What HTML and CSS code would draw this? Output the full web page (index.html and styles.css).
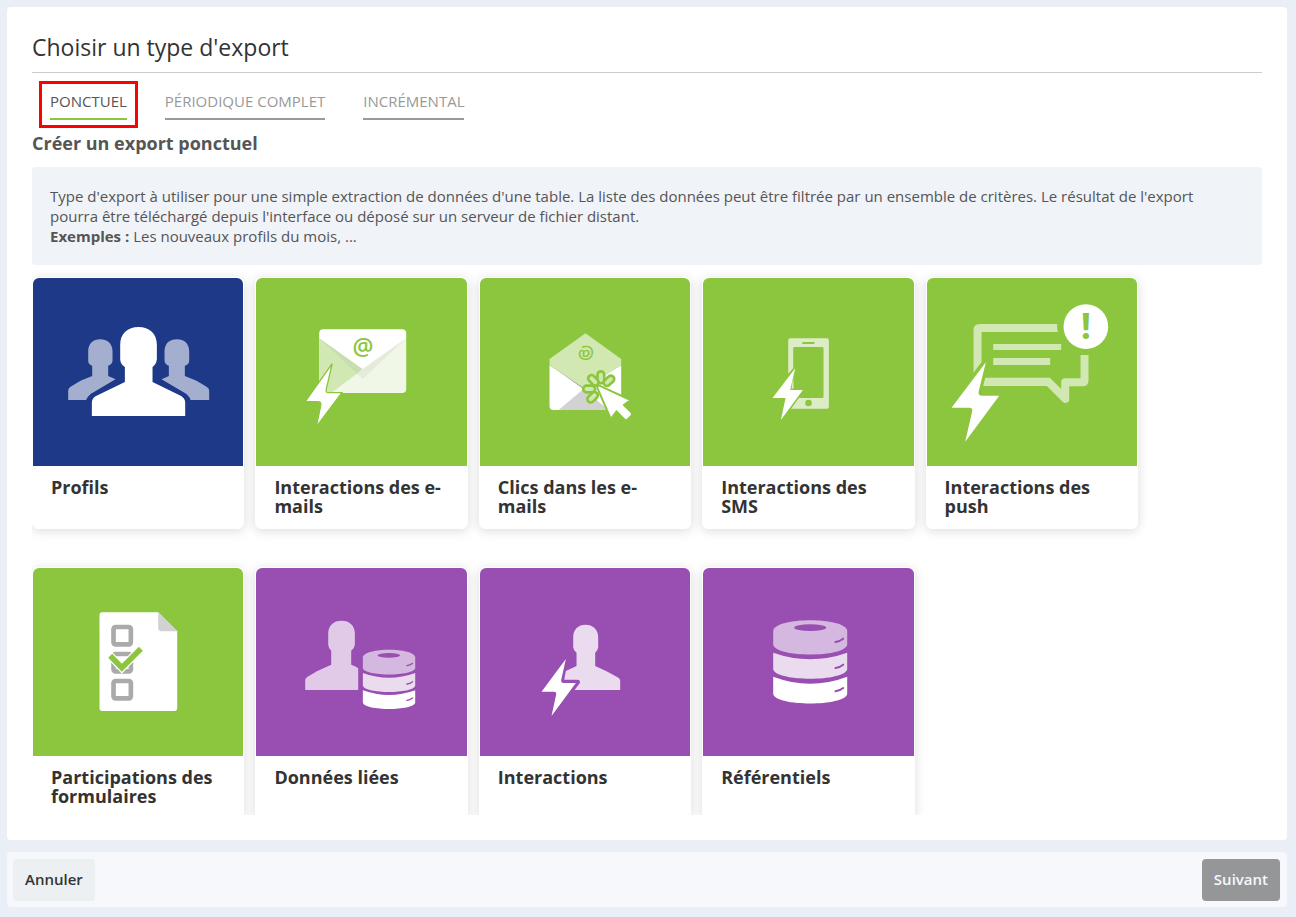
FILE: index.html
```html
<!DOCTYPE html>
<html lang="fr">
<head>
    <meta charset="UTF-8">
    <meta name="viewport" content="width=device-width, initial-scale=1.0">
    <title>Choisir un type d'export</title>
    <link rel="stylesheet" href="styles.css">
</head>
<body>
    <main class="panel">
        <h1>Choisir un type d'export</h1>
        <nav class="tabs">
            <a href="#ponctuel" class="tab active">PONCTUEL</a>
            <a href="#periodique" class="tab">PÉRIODIQUE COMPLET</a>
            <a href="#incremental" class="tab">INCRÉMENTAL</a>
        </nav>
        <h2>Créer un export ponctuel</h2>
        <div class="description">
            <p>Type d'export à utiliser pour une simple extraction de données d'une table. La liste des données peut être filtrée par un ensemble de critères. Le résultat de l'export pourra être téléchargé depuis l'interface ou déposé sur un serveur de fichier distant.</p>
            <p><strong>Exemples :</strong> Les nouveaux profils du mois, ...</p>
        </div>

        <div class="card-list">
            <a href="#profils" class="card">
                <svg class="card-image blue" viewBox="24 24 630 564" aria-hidden="true">
                    <g fill="#a4afcf">
                        <path d="M189 244C189 221 204 208 225 208S262 221 262 244V272Q261 283 249 287V318L271 328L205 367Q188 376 183 390H129V362Q129 355 136 350L166 332L201 318V287Q189 283 189 272Z"/>
                        <path d="M492 244C492 221 477 208 455 208S418 221 418 244V272Q419 283 431 287V318L409 328L475 367Q492 376 496 390H552V362Q552 355 544 350L514 332L479 318V287Q492 283 492 272Z"/>
                    </g>
                    <path fill="#fff" d="M285 224C285 191 307 171 340 171S395 191 395 224V268Q393 284 382 291V336L468 378Q480 386 480 398V438H200V398Q200 386 211 379L299 336V291Q286 284 285 268Z"/>
                </svg>
                <span class="card-title">Profils</span>
            </a>

            <a href="#interactions-emails" class="card">
                <svg class="card-image green" viewBox="18 24 630 564" aria-hidden="true">
                    <path fill="#f1f7e6" d="M207 204H468V357Q468 369 456 369H219Q207 369 207 357Z"/>
                    <path fill="#d1e8b2" d="M207 204L337 296L330 304L243 369H219Q207 369 207 357Z"/>
                    <path fill="#c8deb0" d="M207 204L337 296L321 312Z"/>
                    <path fill="#e5eadb" d="M468 204L337 296L321 310L338 326Z"/>
                    <path fill="#fff" d="M207 204V190Q207 178 219 178H456Q468 178 468 190V204L337 297Z"/>
                    <text class="at" x="338" y="254" font-size="70">@</text>
                    <path fill="#fff" stroke="#8cc63f" stroke-width="4" d="M246 281L165 395H203Q213 395 212 405L198 471L275 368H235Q226 368 228 358Z"/>
                </svg>
                <span class="card-title">Interactions des e-mails</span>
            </a>

            <a href="#clics-emails" class="card">
                <svg class="card-image green" viewBox="15 24 630 564" aria-hidden="true">
                    <path fill="#fff" d="M223 286L325 352L438 286V420H235Q223 420 223 408Z"/>
                    <path fill="#d2d2d2" d="M250 420L325 357L400 420Z"/>
                    <path fill="#aaa" d="M223 284L325 358L438 284L330 340Z"/>
                    <path fill="#d1e8b2" d="M223 267L331 190L438 267V285L337 352Q326 355 316 347L223 285Z"/>
                    <text class="at" x="332" y="236" font-size="54" transform="rotate(180 332 250)" dy="32">@</text>
                    <g fill="#d1e8b2" stroke="#8cc63f" stroke-width="8">
                        <rect x="367" y="304" width="20" height="36" rx="10"/>
                        <rect x="367" y="304" width="20" height="36" rx="10" transform="rotate(47 377 355)"/>
                        <rect x="367" y="304" width="20" height="36" rx="10" transform="rotate(-43 377 355)"/>
                        <rect x="367" y="304" width="20" height="36" rx="10" transform="rotate(-90 377 357)"/>
                        <rect x="367" y="304" width="20" height="36" rx="10" transform="rotate(-135 377 357)"/>
                    </g>
                    <path fill="#fff" stroke="#8cc63f" stroke-width="6" stroke-linejoin="round" d="M371 346Q365 347 367 355L407 447L424 424L446 447Q452 454 459 447L468 438Q474 431 467 425L446 405L466 390Z"/>
                </svg>
                <span class="card-title">Clics dans les e-mails</span>
            </a>

            <a href="#interactions-sms" class="card">
                <svg class="card-image green" viewBox="9 24 630 564" aria-hidden="true">
                    <path fill="#dcedc6" fill-rule="evenodd" d="M270 205H380Q386 205 386 211V410Q386 416 380 416H270Q264 416 264 410V211Q264 205 270 205ZM283 231Q279 231 279 235V384H366Q370 384 370 380V235Q370 231 366 231Z"/>
                    <rect x="306" y="216" width="37" height="6" rx="2" fill="#8cc63f"/>
                    <circle cx="325" cy="399" r="10" fill="#8cc63f"/>
                    <path fill="#8cc63f" d="M287 286L258 318L200 395L255 430H263L296 384L275 352Z"/>
                    <path fill="#dcedc6" d="M279 325L280 353L274 358Z"/>
                    <path fill="#fff" d="M285 295L217 384H256L242 450L308 360H270Z"/>
                </svg>
                <span class="card-title">Interactions des SMS</span>
            </a>

            <a href="#interactions-push" class="card">
                <svg class="card-image green" viewBox="21 24 630 564" aria-hidden="true">
                    <g fill="#d1e8b2">
                        <path d="M160 308V180Q160 162 178 162H411V174L413 186H184V276Z"/>
                        <path d="M195 323H389L423 357V337Q423 325 435 325H481V255H505V331Q505 349 487 349H447V391Q444 400 433 399L428 396L380 348H189Z"/>
                        <path d="M219 222H423V240H219ZM219 264H390V285H219Z"/>
                    </g>
                    <circle cx="497" cy="170" r="67" fill="#fff"/>
                    <text class="mark" x="497" y="208" font-size="108">!</text>
                    <path fill="#fff" d="M197 277L94 413H148Q158 413 156 424L135 515L237 377H185Q174 377 175 366Z"/>
                </svg>
                <span class="card-title">Interactions des push</span>
            </a>

            <a href="#participations" class="card">
                <svg class="card-image green" viewBox="24 24 630 564" aria-hidden="true">
                    <path fill="#fff" d="M231 157H399L456 214V445Q456 453 448 453H231Q223 453 223 445V165Q223 157 231 157Z"/>
                    <path fill="#d2d2d2" d="M399 157L456 214H409Q399 214 399 204Z"/>
                    <g fill="none" stroke="#aaa" stroke-width="14">
                        <rect x="265" y="201" width="52" height="52" rx="6"/>
                        <rect x="265" y="282" width="52" height="52" rx="6"/>
                        <rect x="265" y="363" width="52" height="52" rx="6"/>
                    </g>
                    <path fill="none" stroke="#fff" stroke-width="24" d="M248 280L290 324L354 258"/>
                    <path fill="none" stroke="#8cc63f" stroke-width="17" d="M255 287L290 323L347 266"/>
                </svg>
                <span class="card-title">Participations des formulaires</span>
            </a>

            <a href="#donnees-liees" class="card">
                <svg class="card-image purple" viewBox="18 24 630 564" aria-hidden="true">
                    <path fill="#e1cae7" d="M234 221C234 196 250 182 274 182S314 196 314 221V254Q313 265 303 272V314Q315 317 324 325V390H165V361Q165 355 171 351L200 334L243 314V272Q235 265 234 254Z"/>
                    <path fill="#d4b8df" d="M338 292C342 262 491 262 495 292V325C489 350 344 350 338 325Z"/>
                    <ellipse cx="416" cy="286" rx="34" ry="7" fill="#984fb1"/>
                    <path fill="#eadbef" d="M338 339Q416 368 495 339V377C489 402 344 402 338 377Z"/>
                    <path fill="#fff" d="M338 391Q416 419 495 391V428C489 453 344 453 338 428Z"/>
                    <path class="slots" stroke-width="4" d="M470 317Q480 316 487 310M470 372Q480 371 487 365M470 421Q480 420 487 414"/>
                </svg>
                <span class="card-title">Données liées</span>
            </a>

            <a href="#interactions" class="card">
                <svg class="card-image purple" viewBox="15 24 630 564" aria-hidden="true">
                    <path fill="#eadbef" d="M294 232C294 208 309 194 331 194S369 208 369 232V262Q368 272 360 278V318L397 335L427 352Q435 356 435 363V390H298L314 369Q316 359 306 359H267L272 333L304 318V278Q295 272 294 262Z"/>
                    <path fill="#fff" d="M272 297L199 395H236Q244 395 243 403L229 468L302 369H265Q257 369 258 360Z"/>
                </svg>
                <span class="card-title">Interactions</span>
            </a>

            <a href="#referentiels" class="card">
                <svg class="card-image purple" viewBox="9 24 630 564" aria-hidden="true">
                    <path fill="#d4b8df" d="M219 212C225 170 435 170 441 212V254C433 293 227 293 219 254Z"/>
                    <ellipse cx="330" cy="203" rx="48" ry="10" fill="#984fb1"/>
                    <path fill="#eadbef" d="M219 278Q330 317 441 278V328C433 366 227 366 219 328Z"/>
                    <path fill="#fff" d="M219 350Q330 392 441 350V402C433 440 227 440 219 402Z"/>
                    <path class="slots" stroke-width="6" d="M406 246Q419 244 429 236M406 324Q419 322 429 314M406 394Q419 392 429 384"/>
                </svg>
                <span class="card-title">Référentiels</span>
            </a>
        </div>
    </main>

    <footer class="actions">
        <button type="button" class="btn cancel">Annuler</button>
        <button type="button" class="btn next">Suivant</button>
    </footer>
</body>
</html>
```

FILE: styles.css
```css
* {
    box-sizing: border-box;
}
body {
    display: flex;
    flex-direction: column;
    gap: 12px;
    height: 100vh;
    margin: 0;
    padding: 7px 9px 10px 7px;
    font-family: "Open Sans", sans-serif;
    font-size: 15px;
    line-height: 20px;
    color: #555;
    background-color: #eaeff7;
}
.panel {
    display: flex;
    flex-direction: column;
    flex: 1;
    min-height: 0;
    padding: 25px;
    background-color: white;
    border-radius: 4px;
}
h1 {
    margin: 0;
    padding-bottom: 10px;
    font-size: 23px;
    font-weight: 400;
    line-height: 30px;
    color: #333;
    border-bottom: 1px solid #ccc;
}
.tabs {
    display: flex;
    gap: 38px;
    margin-top: 18px;
    padding-left: 18px;
}
.tab {
    padding-bottom: 7px;
    color: #999;
    text-decoration: none;
    border-bottom: 2px solid #999;
}
.tab.active {
    position: relative;
    color: #555;
    border-bottom-color: #8cc63f;
}
.tab.active::after {
    content: "";
    position: absolute;
    inset: -10px -11px -10px;
    border: 3px solid #f00;
}
h2 {
    margin: 11px 0 12px;
    font-size: 18px;
    font-weight: 700;
    line-height: 24px;
}
.description {
    padding: 19px 18px;
    background-color: #f0f3f8;
    border-radius: 4px;
}
.description p {
    margin: 0;
}
.card-list {
    display: grid;
    grid-template-columns: repeat(5, 1fr);
    align-content: start;
    gap: 38px 11px;
    flex: 1;
    min-height: 0;
    padding: 12px 124px 0 0;
    overflow-y: auto;
    scrollbar-width: none;
}
.card {
    border: 1px solid white;
    border-radius: 6px;
    color: #333;
    text-decoration: none;
    background-color: white;
    box-shadow: 0 2px 12px rgba(0, 0, 0, 0.14);
}
.card-image {
    display: block;
    width: 100%;
    height: 188px;
    border-radius: 6px 6px 0 0;
}
.blue {
    background-color: #1d3987;
}
.green {
    background-color: #8cc63f;
}
.purple {
    background-color: #984fb1;
}
.at,
.mark {
    fill: #8cc63f;
    font-weight: 600;
    text-anchor: middle;
}
.mark {
    font-weight: 700;
}
.slots {
    fill: none;
    stroke: #984fb1;
    stroke-linecap: round;
}
.card-title {
    display: block;
    min-height: 62px;
    padding: 12px 18px;
    font-size: 18px;
    font-weight: 700;
    line-height: 19px;
}
.actions {
    display: flex;
    justify-content: space-between;
    padding: 7px 7px 6px 6px;
    background-color: #f6f8fc;
    border-radius: 4px;
}
.btn {
    height: 42px;
    padding: 0 12px 2px;
    font-family: inherit;
    font-size: 15px;
    font-weight: 600;
    border: none;
    border-radius: 4px;
    cursor: pointer;
}
.cancel {
    color: #333;
    background-color: #ecf0f3;
}
.next {
    color: #f6f8fc;
    background-color: #959698;
}
```
